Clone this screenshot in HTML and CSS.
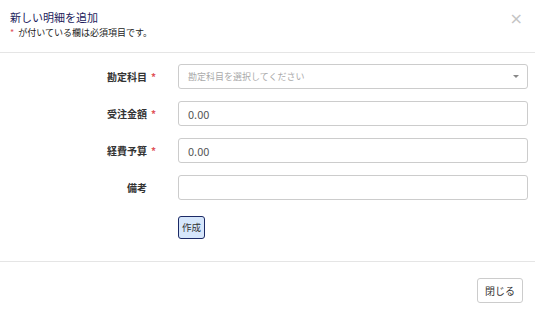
FILE: index.html
```html
<!DOCTYPE html>
<html lang="ja">

<head>
    <meta charset="UTF-8">
    <meta name="viewport" content="width=device-width, initial-scale=1.0">
    <title>新しい明細を追加</title>
    <link rel="stylesheet" href="styles.css">
</head>

<body>
    <div class="modal">
        <div class="modal-header">
            <div>
                <h1 class="modal-title">新しい明細を追加</h1>
                <p class="modal-note"><span class="req">*</span> が付いている欄は必須項目です。</p>
            </div>
            <button class="close" type="button">&times;</button>
        </div>

        <form class="modal-body">
            <div class="row">
                <label class="label">勘定科目<span class="req">*</span></label>
                <div class="select">
                    <span class="placeholder">勘定科目を選択してください</span>
                    <span class="caret"></span>
                </div>
            </div>
            <div class="row">
                <label class="label">受注金額<span class="req">*</span></label>
                <input class="input" type="text" value="0.00">
            </div>
            <div class="row">
                <label class="label">経費予算<span class="req">*</span></label>
                <input class="input" type="text" value="0.00">
            </div>
            <div class="row">
                <label class="label">備考<span class="req hidden">*</span></label>
                <input class="input" type="text">
            </div>
            <div class="row row-actions">
                <span></span>
                <div><button class="btn-create" type="button">作成</button></div>
            </div>
        </form>

        <div class="modal-footer">
            <button class="btn-close" type="button">閉じる</button>
        </div>
    </div>
</body>

</html>
```

FILE: styles.css
```css
/* General Page Styles */
body {
    margin: 0;
    background-color: #fff;
    font-family: 'Noto Sans CJK JP', 'Noto Sans', sans-serif;
    color: #333;
}

.modal {
    width: 535px;
}

/* Header */
.modal-header {
    display: flex;
    justify-content: space-between;
    align-items: flex-start;
    height: 53px;
    box-sizing: border-box;
    padding: 9px 12px 0 10px;
    border-bottom: 1px solid #e5e5e5;
}

.modal-title {
    margin: 0;
    font-size: 11px;
    font-weight: normal;
    line-height: 16px;
    color: #1c1c5c;
}

.modal-note {
    margin: 2px 0 0;
    font-size: 9px;
    line-height: 12px;
    color: #222;
}

.req {
    color: #e0535a;
    margin-left: 4px;
}

.modal-note .req {
    margin-left: 0;
    margin-right: 2px;
}

.hidden {
    visibility: hidden;
}

.close {
    border: none;
    background: none;
    padding: 0;
    margin-top: 3px;
    font-size: 16px;
    line-height: 14px;
    color: #c4c4c4;
    font-family: 'DejaVu Sans', sans-serif;
}

/* Form */
.modal-body {
    padding: 11px 0 0;
    height: 208px;
    box-sizing: border-box;
}

.row {
    display: grid;
    grid-template-columns: 156px 350px;
    column-gap: 22px;
    align-items: center;
    margin-bottom: 12px;
}

.row-actions {
    margin-top: 16px;
    margin-bottom: 0;
}

.label {
    text-align: right;
    font-size: 10px;
    font-weight: bold;
    color: #333;
}

.input,
.select {
    box-sizing: border-box;
    width: 350px;
    height: 25px;
    border: 1px solid #ccc;
    border-radius: 3px;
    padding: 0 9px;
    font-family: inherit;
    font-size: 11px;
    color: #555;
    background-color: #fff;
}

.select {
    display: flex;
    justify-content: space-between;
    align-items: center;
}

.placeholder {
    font-size: 9px;
    color: #aaa;
}

.caret {
    width: 0;
    height: 0;
    border-left: 3px solid transparent;
    border-right: 3px solid transparent;
    border-top: 3px solid #888;
    margin-right: -1px;
}

.btn-create {
    display: block;
    height: 23px;
    padding: 0 3px;
    border: 1px solid #1c2a66;
    border-radius: 3px;
    background-color: #d6e6fb;
    font-family: inherit;
    font-size: 9.5px;
    line-height: 21px;
    color: #333;
}

/* Footer */
.modal-footer {
    display: flex;
    justify-content: flex-end;
    padding: 16px 12px 0;
    border-top: 1px solid #e5e5e5;
}

.btn-close {
    height: 25px;
    padding: 0 7px;
    border: 1px solid #ccc;
    border-radius: 3px;
    background-color: #fff;
    font-family: inherit;
    font-size: 10px;
    color: #333;
}
```
